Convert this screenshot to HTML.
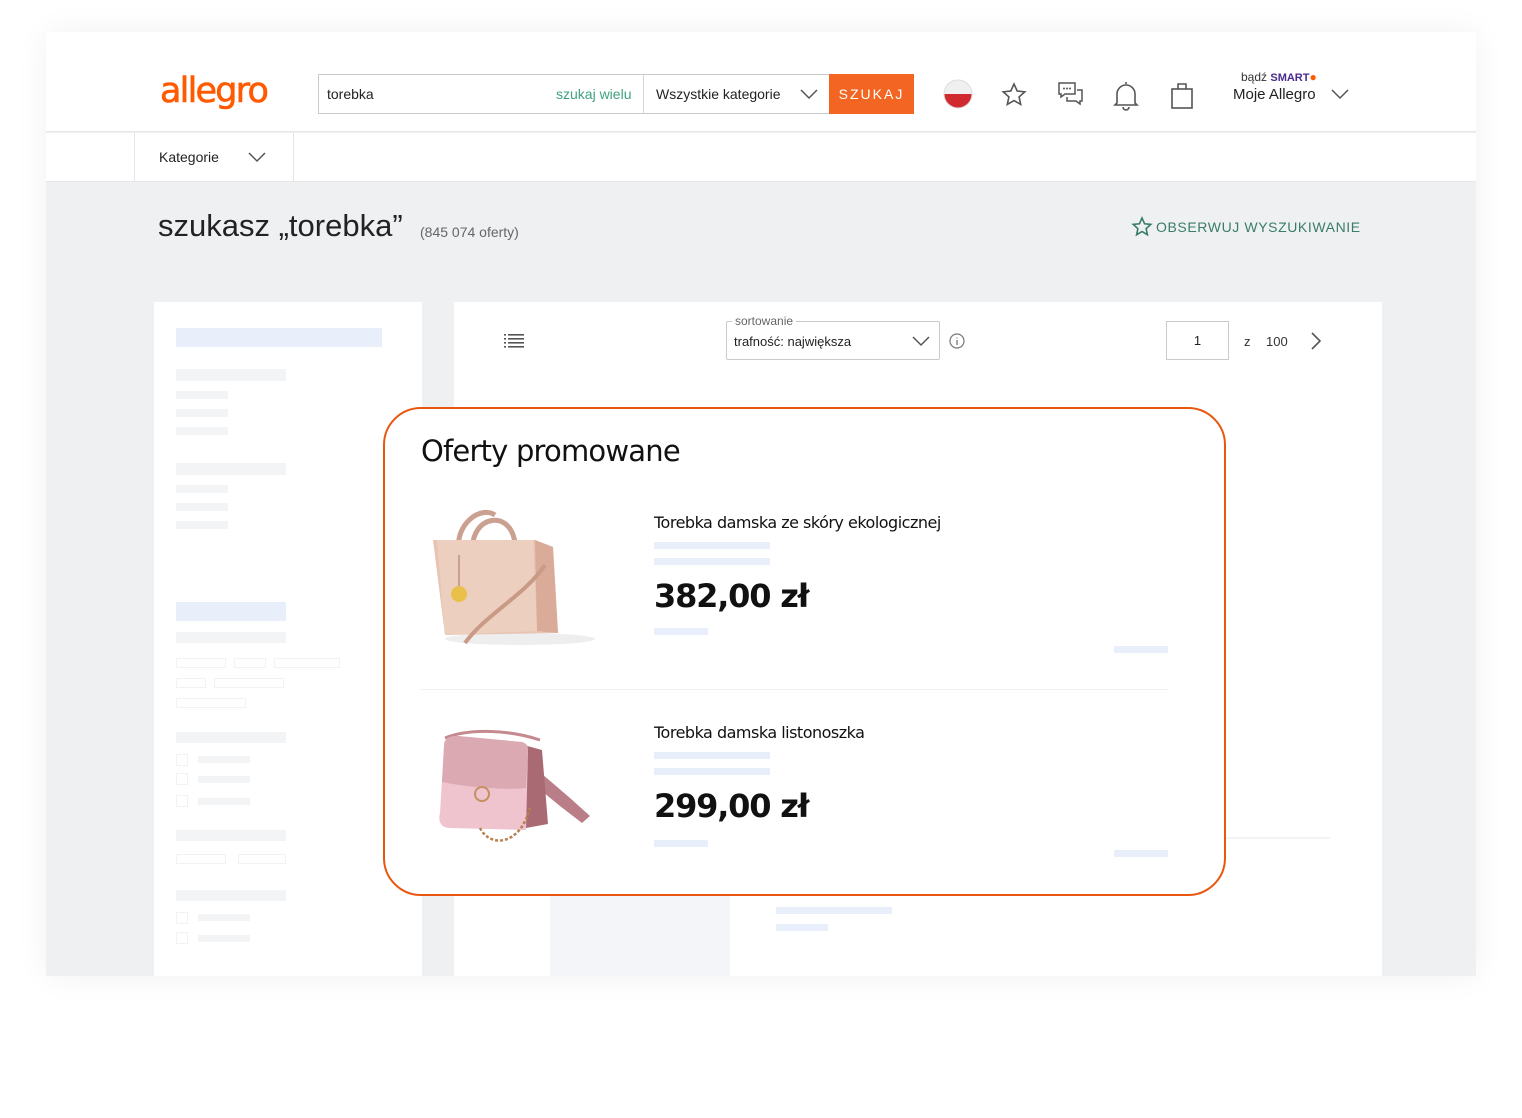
<!DOCTYPE html>
<html><head><meta charset="utf-8">
<style>
*{margin:0;padding:0;box-sizing:border-box}
body{width:1522px;height:1118px;background:#fff;position:relative;overflow:hidden;font-family:"Liberation Sans",sans-serif;color:#222}
.a{position:absolute}
.frame{left:46px;top:32px;width:1430px;height:944px;background:#eff0f2;box-shadow:0 0 30px rgba(0,0,0,0.06)}
.sk{position:absolute;background:#f3f4f6}
.bl{position:absolute;background:#e9eefb}
.ol{position:absolute;border:1px solid #f1f2f4;background:#fff}
</style></head><body>
<div class="a frame"></div>
<div class="a" style="left:46px;top:32px;width:1430px;height:100px;background:#fff;border-bottom:1px solid #e6e7ea"></div>
<div class="a" style="left:160px;top:71px;font-size:35px;color:#ff5a00;letter-spacing:-1.8px;font-family:'DejaVu Sans','Liberation Sans',sans-serif;font-weight:500;-webkit-text-stroke:0.6px #ff5a00">allegro</div>
<div class="a" style="left:318px;top:74px;width:596px;height:40px;border:1px solid #c9cacd;background:#fff"></div>
<div class="a" style="left:327px;top:86px;font-size:14px;color:#222">torebka</div>
<div class="a" style="left:556px;top:86px;font-size:14px;color:#3fa27e">szukaj wielu</div>
<div class="a" style="left:643px;top:75px;width:1px;height:38px;background:#d5d6d8"></div>
<div class="a" style="left:656px;top:86px;font-size:14px;color:#222">Wszystkie kategorie</div>
<svg class="a" style="left:800px;top:88px" width="18" height="12"><path d="M1 2l8 8 8-8" fill="none" stroke="#555" stroke-width="1.5"/></svg>
<div class="a" style="left:829px;top:74px;width:85px;height:40px;background:#f26522;color:#fff;font-size:14px;letter-spacing:2px;text-align:center;line-height:40px">SZUKAJ</div>
<svg class="a" style="left:943px;top:79px" width="30" height="30"><defs><clipPath id="c"><circle cx="15" cy="15" r="14"/></clipPath></defs><g clip-path="url(#c)"><rect width="30" height="15" fill="#f0f0f0"/><rect y="15" width="30" height="15" fill="#d02a30"/></g><circle cx="15" cy="15" r="14" fill="none" stroke="#ddd"/></svg>
<svg class="a" style="left:1000px;top:81px" width="28" height="28"><path d="M14 3l3.2 7 7.6.8-5.7 5.1 1.6 7.5L14 19.6 7.3 23.4l1.6-7.5L3.2 10.8l7.6-.8z" fill="none" stroke="#555" stroke-width="1.6"/></svg>
<svg class="a" style="left:1056px;top:80px" width="30" height="30"><path d="M3 3h16v11H9l-4 3v-3H3z" fill="none" stroke="#555" stroke-width="1.5"/><path d="M21 10h5v11h-2v3l-4-3h-9v-4" fill="none" stroke="#555" stroke-width="1.5"/><circle cx="8" cy="8.5" r="1" fill="#555"/><circle cx="11" cy="8.5" r="1" fill="#555"/><circle cx="14" cy="8.5" r="1" fill="#555"/></svg>
<svg class="a" style="left:1112px;top:79px" width="28" height="32"><path d="M14 3v2M5 24V15a9 9 0 0118 0v9l2 2H3z" fill="none" stroke="#555" stroke-width="1.6"/><path d="M11 28a3 3 0 006 0" fill="none" stroke="#555" stroke-width="1.6"/></svg>
<svg class="a" style="left:1170px;top:80px" width="24" height="30"><rect x="2" y="9" width="20" height="19" fill="none" stroke="#555" stroke-width="1.6"/><path d="M8 9V4h8v5" fill="none" stroke="#555" stroke-width="1.6"/></svg>
<div class="a" style="left:1241px;top:70px;font-size:12px;color:#333">bądź <b style="color:#4a2a8c;font-size:11px">SMART</b><span style="color:#ff5a00">●</span></div>
<div class="a" style="left:1233px;top:86px;font-size:15px;color:#222">Moje Allegro</div>
<svg class="a" style="left:1331px;top:88px" width="18" height="12"><path d="M1 2l8 8 8-8" fill="none" stroke="#555" stroke-width="1.5"/></svg>
<div class="a" style="left:46px;top:133px;width:1430px;height:49px;background:#fff;border-bottom:1px solid #e6e7ea"></div>
<div class="a" style="left:134px;top:133px;width:160px;height:49px;border-left:1px solid #e3e4e6;border-right:1px solid #e3e4e6"></div>
<div class="a" style="left:159px;top:149px;font-size:14px;color:#222">Kategorie</div>
<svg class="a" style="left:248px;top:151px" width="18" height="12"><path d="M1 2l8 8 8-8" fill="none" stroke="#555" stroke-width="1.5"/></svg>
<div class="a" style="left:158px;top:208px;font-size:31px;color:#222">szukasz „torebka”</div>
<div class="a" style="left:420px;top:224px;font-size:14px;color:#666">(845 074 oferty)</div>
<svg class="a" style="left:1131px;top:216px" width="22" height="22"><path d="M11 2l2.6 5.8 6.2.6-4.7 4.2 1.3 6.1L11 15.5l-5.4 3.2 1.3-6.1-4.7-4.2 6.2-.6z" fill="none" stroke="#3a7c6a" stroke-width="1.6"/></svg>
<div class="a" style="left:1156px;top:219px;font-size:14px;color:#3a7c6a;letter-spacing:0.6px">OBSERWUJ WYSZUKIWANIE</div>
<div class="a" style="left:154px;top:302px;width:268px;height:674px;background:#fff"></div>
<div class="bl" style="left:176px;top:328px;width:206px;height:19px"></div>
<div class="sk" style="left:176px;top:369px;width:110px;height:12px"></div>
<div class="sk" style="left:176px;top:391px;width:52px;height:8px"></div>
<div class="sk" style="left:176px;top:409px;width:52px;height:8px"></div>
<div class="sk" style="left:176px;top:427px;width:52px;height:8px"></div>
<div class="sk" style="left:176px;top:463px;width:110px;height:12px"></div>
<div class="sk" style="left:176px;top:485px;width:52px;height:8px"></div>
<div class="sk" style="left:176px;top:503px;width:52px;height:8px"></div>
<div class="sk" style="left:176px;top:521px;width:52px;height:8px"></div>
<div class="bl" style="left:176px;top:602px;width:110px;height:19px"></div>
<div class="sk" style="left:176px;top:632px;width:110px;height:11px"></div>
<div class="ol" style="left:176px;top:658px;width:50px;height:10px"></div>
<div class="ol" style="left:234px;top:658px;width:32px;height:10px"></div>
<div class="ol" style="left:274px;top:658px;width:66px;height:10px"></div>
<div class="ol" style="left:176px;top:678px;width:30px;height:10px"></div>
<div class="ol" style="left:214px;top:678px;width:70px;height:10px"></div>
<div class="ol" style="left:176px;top:698px;width:70px;height:10px"></div>
<div class="sk" style="left:176px;top:732px;width:110px;height:11px"></div>
<div class="ol" style="left:176px;top:754px;width:12px;height:12px"></div><div class="sk" style="left:198px;top:756px;width:52px;height:7px"></div>
<div class="ol" style="left:176px;top:773px;width:12px;height:12px"></div><div class="sk" style="left:198px;top:776px;width:52px;height:7px"></div>
<div class="ol" style="left:176px;top:795px;width:12px;height:12px"></div><div class="sk" style="left:198px;top:798px;width:52px;height:7px"></div>
<div class="sk" style="left:176px;top:830px;width:110px;height:11px"></div>
<div class="ol" style="left:176px;top:854px;width:50px;height:10px"></div>
<div class="ol" style="left:238px;top:854px;width:48px;height:10px"></div>
<div class="sk" style="left:176px;top:890px;width:110px;height:11px"></div>
<div class="ol" style="left:176px;top:912px;width:12px;height:12px"></div><div class="sk" style="left:198px;top:914px;width:52px;height:7px"></div>
<div class="ol" style="left:176px;top:932px;width:12px;height:12px"></div><div class="sk" style="left:198px;top:935px;width:52px;height:7px"></div>
<div class="a" style="left:454px;top:302px;width:928px;height:674px;background:#fff"></div>
<svg class="a" style="left:504px;top:334px" width="20" height="14"><g fill="#555"><rect x="0" y="0" width="2" height="1.6"/><rect x="4" y="0" width="16" height="1.6"/><rect x="0" y="4" width="2" height="1.6"/><rect x="4" y="4" width="16" height="1.6"/><rect x="0" y="8" width="2" height="1.6"/><rect x="4" y="8" width="16" height="1.6"/><rect x="0" y="12" width="2" height="1.6"/><rect x="4" y="12" width="16" height="1.6"/></g></svg>
<div class="a" style="left:726px;top:321px;width:214px;height:39px;border:1px solid #c9cacd;border-radius:2px"></div>
<div class="a" style="left:732px;top:314px;padding:0 3px;background:#fff;font-size:12px;color:#666">sortowanie</div>
<div class="a" style="left:734px;top:334px;font-size:13px;color:#222">trafność: największa</div>
<svg class="a" style="left:912px;top:335px" width="18" height="12"><path d="M1 2l8 8 8-8" fill="none" stroke="#555" stroke-width="1.5"/></svg>
<svg class="a" style="left:948px;top:332px" width="18" height="18"><circle cx="9" cy="9" r="7" fill="none" stroke="#777" stroke-width="1.2"/><path d="M9 8v5M9 5.5v1" stroke="#777" stroke-width="1.3"/></svg>
<div class="a" style="left:1166px;top:321px;width:63px;height:39px;border:1px solid #c9cacd;text-align:center;line-height:38px;font-size:13px">1</div>
<div class="a" style="left:1244px;top:334px;font-size:13px;color:#333">z</div>
<div class="a" style="left:1266px;top:334px;font-size:13px;color:#333">100</div>
<svg class="a" style="left:1310px;top:332px" width="12" height="18"><path d="M2 1l8 8-8 8" fill="none" stroke="#555" stroke-width="1.6"/></svg>
<div class="a" style="left:1225px;top:837px;width:105px;height:2px;background:#f3f4f6"></div>
<div class="a" style="left:550px;top:896px;width:180px;height:80px;background:#f4f5f9"></div>
<div class="bl" style="left:776px;top:907px;width:116px;height:7px"></div>
<div class="bl" style="left:776px;top:924px;width:52px;height:7px"></div>
<div class="a" style="left:383px;top:407px;width:843px;height:489px;border:2px solid #e8560f;border-radius:38px;background:#fff"></div>
<div class="a" style="left:421px;top:434px;font-size:29px;color:#111;font-family:'DejaVu Sans','Liberation Sans',sans-serif;letter-spacing:-0.8px">Oferty promowane</div>
<svg class="a" style="left:425px;top:505px" width="175" height="145">
<ellipse cx="95" cy="134" rx="75" ry="6" fill="#eee"/>
<path d="M34 45 C30 20 55 0 70 10 M48 45 C45 12 85 2 90 38" fill="none" stroke="#caa090" stroke-width="5"/>
<path d="M8 35 L110 35 L128 42 L133 128 L20 130 Z" fill="#e7c4b4"/>
<path d="M110 35 L128 42 L133 128 L112 126 Z" fill="#d9ab98"/>
<path d="M12 35 L108 35 L112 126 L20 130 Z" fill="#edcfc0"/>
<path d="M40 138 C60 110 100 90 120 60" fill="none" stroke="#c99a86" stroke-width="4"/>
<circle cx="34" cy="89" r="8" fill="#e8c04a"/>
<line x1="34" y1="50" x2="34" y2="81" stroke="#caa090" stroke-width="2"/>
</svg>
<div class="a" style="left:654px;top:513px;font-size:16px;color:#111;font-family:'DejaVu Sans','Liberation Sans',sans-serif;letter-spacing:-0.5px">Torebka damska ze skóry ekologicznej</div>
<div class="bl" style="left:654px;top:542px;width:116px;height:7px"></div>
<div class="bl" style="left:654px;top:558px;width:116px;height:7px"></div>
<div class="a" style="left:654px;top:577px;font-size:32px;font-weight:bold;color:#111;font-family:'DejaVu Sans','Liberation Sans',sans-serif;letter-spacing:-1.2px">382,00 zł</div>
<div class="bl" style="left:654px;top:628px;width:54px;height:7px"></div>
<div class="bl" style="left:1114px;top:646px;width:54px;height:7px"></div>
<div class="a" style="left:420px;top:689px;width:748px;height:1px;background:#f1f2f4"></div>
<svg class="a" style="left:430px;top:728px" width="170" height="122">
<path d="M15 10 C40 0 80 2 110 12" fill="none" stroke="#c48a90" stroke-width="3"/>
<path d="M105 40 L140 70 L160 88 L152 95 L130 78 L108 60Z" fill="#b97e87"/>
<path d="M90 16 L112 22 L118 96 L96 100 Z" fill="#a96a74"/>
<path d="M14 18 C14 10 20 8 28 8 L92 14 C96 15 98 18 98 22 L96 102 L20 100 C10 100 8 92 10 85 Z" fill="#efc4cf"/>
<path d="M14 18 C14 10 20 8 28 8 L92 14 C96 15 98 18 98 22 L96 60 C80 62 40 60 12 54 Z" fill="#dba9b1"/>
<circle cx="52" cy="66" r="7" fill="none" stroke="#c59060" stroke-width="2"/>
<path d="M50 100 C60 120 90 118 100 80" fill="none" stroke="#b98050" stroke-width="2.5" stroke-dasharray="3 2"/>
</svg>
<div class="a" style="left:654px;top:723px;font-size:16px;color:#111;font-family:'DejaVu Sans','Liberation Sans',sans-serif;letter-spacing:-0.5px">Torebka damska listonoszka</div>
<div class="bl" style="left:654px;top:752px;width:116px;height:7px"></div>
<div class="bl" style="left:654px;top:768px;width:116px;height:7px"></div>
<div class="a" style="left:654px;top:787px;font-size:32px;font-weight:bold;color:#111;font-family:'DejaVu Sans','Liberation Sans',sans-serif;letter-spacing:-1.2px">299,00 zł</div>
<div class="bl" style="left:654px;top:840px;width:54px;height:7px"></div>
<div class="bl" style="left:1114px;top:850px;width:54px;height:7px"></div>
</body></html>
